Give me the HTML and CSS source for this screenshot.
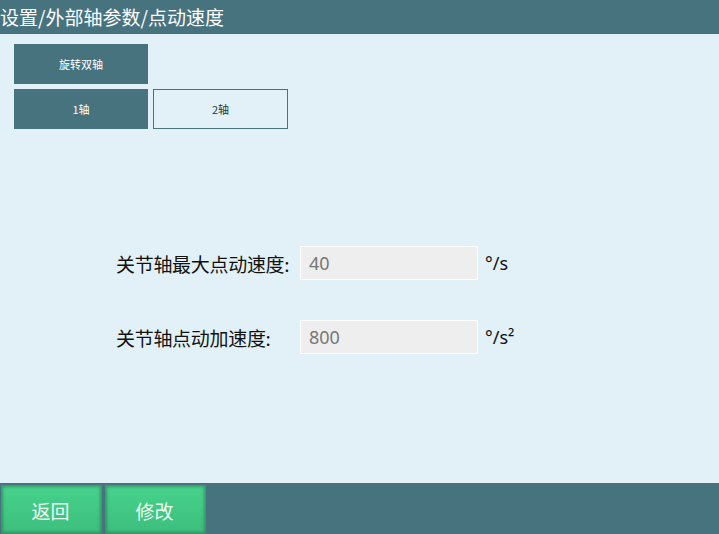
FILE: index.html
```html
<!DOCTYPE html>
<html lang="zh">
<head>
<meta charset="utf-8">
<link rel="stylesheet" href="styles.css">
</head>
<body>
<div class="app">
  <header class="topbar">设置/外部轴参数/点动速度</header>
  <main class="content">
    <div class="tabs">
      <div class="tab-row">
        <div class="tab active">旋转双轴</div>
      </div>
      <div class="tab-row">
        <div class="tab active">1轴</div>
        <div class="tab wide">2轴</div>
      </div>
    </div>
    <div class="form">
      <div class="field">
        <span class="label">关节轴最大点动速度:</span>
        <div class="input">40</div>
        <span class="unit">°/s</span>
      </div>
      <div class="field">
        <span class="label">关节轴点动加速度:</span>
        <div class="input">800</div>
        <span class="unit">°/s²</span>
      </div>
    </div>
  </main>
  <footer class="bottombar">
    <button class="btn">返回</button>
    <button class="btn">修改</button>
  </footer>
</div>
</body>
</html>
```
FILE: styles.css
```css
* { box-sizing: border-box; }
html, body { margin: 0; padding: 0; }
body {
  width: 719px;
  height: 534px;
  overflow: hidden;
  font-family: "Noto Sans CJK SC", "Noto Sans", sans-serif;
  background: #e2f1f7;
}
.app {
  display: flex;
  flex-direction: column;
  height: 534px;
}
.topbar {
  height: 34px;
  background: #47737f;
  color: #ffffff;
  font-size: 19px;
  line-height: 34px;
}
.content {
  flex: 1;
}
.tabs {
  padding: 10px 0 0 14px;
  display: flex;
  flex-direction: column;
  gap: 5px;
}
.tab-row {
  display: flex;
  gap: 5px;
}
.tab {
  width: 134px;
  height: 40px;
  border: 1px solid #47737f;
  color: #333;
  font-size: 11px;
  display: flex;
  align-items: center;
  justify-content: center;
}
.tab.wide { width: 135px; }
.tab.active {
  background: #47737f;
  color: #ffffff;
}
.form {
  margin-top: 117px;
  padding-left: 116px;
  display: flex;
  flex-direction: column;
  gap: 40px;
}
.field {
  display: flex;
  align-items: center;
  height: 34px;
}
.label {
  width: 184px;
  font-size: 19px;
  color: #111;
  letter-spacing: -0.3px;
}
.input {
  width: 178px;
  height: 34px;
  background: #eeeeee;
  border: 1px solid #ffffff;
  color: #777;
  font-size: 18px;
  line-height: 32px;
  padding-left: 8px;
  font-family: "Noto Sans", sans-serif;
}
.unit {
  margin-left: 7px;
  font-size: 18px;
  color: #111;
  font-family: "Noto Sans", sans-serif;
}
.bottombar {
  height: 51px;
  background: #47737f;
  display: flex;
  align-items: flex-end;
  gap: 3px;
  padding-left: 1px;
}
.btn {
  width: 101px;
  height: 49px;
  border: none;
  background: linear-gradient(#47d38c, #3dbd7c);
  box-shadow: inset 0 0 3px 2px rgba(40, 110, 80, 0.55);
  color: #eafff4;
  font-size: 19px;
  font-family: "Noto Sans CJK SC", sans-serif;
  padding: 2px 2px 0 0;
}
```
